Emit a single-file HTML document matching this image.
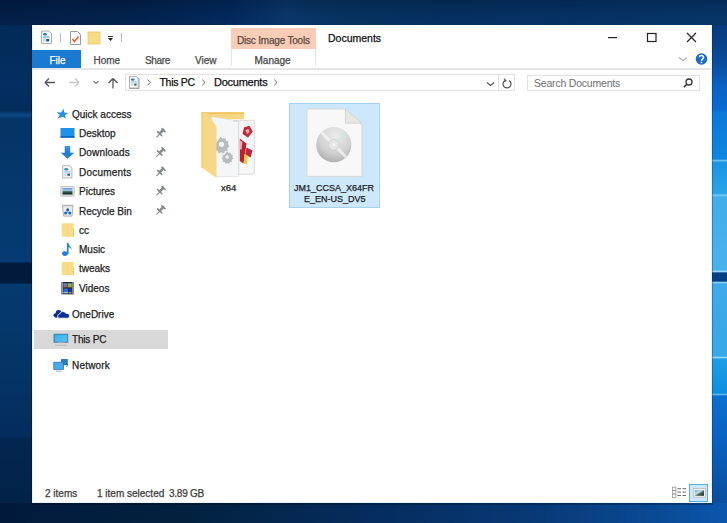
<!DOCTYPE html>
<html><head><meta charset="utf-8">
<style>
*{margin:0;padding:0;box-sizing:border-box}
html,body{width:727px;height:523px;overflow:hidden}
body{position:relative;font-family:"Liberation Sans",sans-serif;background:#03264f}
.a{position:absolute}
.t{position:absolute;white-space:nowrap;line-height:1;color:#222;-webkit-text-stroke:0.25px currentColor}
#bgtop{left:0;top:0;width:727px;height:25px;background:linear-gradient(180deg,rgba(0,0,20,0.18),rgba(0,0,0,0) 60%,rgba(20,60,120,0.08)),linear-gradient(90deg,#021e46 0px,#02214b 130px,#03285a 230px,#093666 285px,#06325f 340px,#052f5e 450px,#053262 600px,#063567 727px)}
#bgleft{left:0;top:25px;width:32px;height:478px;background:linear-gradient(180deg,#022a57 0px,#042f60 60px,#032c5a 86px,#0a4a88 90px,#053466 94px,#053a70 200px,#053a72 237px,#021a3c 238px,#021a3c 258px,#053a70 259px,#043464 350px,#042c5c 410px,#032650 415px,#022248 478px)}
#bgbot{left:0;top:503px;width:727px;height:20px;background:linear-gradient(90deg,#011a3c 0%,#02213f 25%,#052c5c 50%,#083a78 75%,#0a4c98 92%,#0b56ac 100%)}
#bgright{left:712px;top:25px;width:15px;height:478px;background:linear-gradient(180deg,#07387a 0px,#0a4a98 35px,#0a62c4 62px,#0a6ad0 84px,#0c78d8 88px,#0e86e0 134px,#6cc0f0 135.5px,#1b94e2 137.5px,#2aa4e8 169px,#80d0f5 170px,#40aeea 172px,#48b2ec 245px,#9ad8f8 246.5px,#053f85 248px,#053f85 256px,#8ad0f5 257.5px,#3eaaea 259px,#38a8e6 331px,#90d8f8 332.5px,#1e9ee6 334px,#0f8ee0 368px,#60b8f0 369.5px,#0a70d0 371px,#0a60c0 415px,#0a4e9c 478px)}
#win{left:32px;top:25px;width:680px;height:478px;background:#fff;border-left:1px solid #e2f6ff;border-right:1px solid #e2f6ff;border-bottom:1px solid #e6f6ff}
#edgeR{left:712px;top:25px;width:1px;height:478px;background:rgba(0,30,70,0.3)}
#edgeB{left:31px;top:503px;width:682px;height:2px;background:rgba(0,5,25,0.3)}
#edgeL{left:31px;top:25px;width:1px;height:478px;background:rgba(0,10,40,0.4)}
</style></head><body>
<div class="a" id="bgtop"></div>
<div class="a" id="bgleft"></div>
<div class="a" id="bgbot"></div>
<div class="a" id="bgright"></div>
<div class="a" id="win"></div>
<div class="a" id="edgeR"></div>
<div class="a" id="edgeL"></div>
<div class="a" id="edgeB"></div>

<!-- title bar QAT -->
<svg class="a" style="left:40px;top:30px" width="86" height="16" viewBox="0 0 86 16">
  <!-- properties doc -->
  <path d="M1.5 1h7.5l2.5 2.5v10h-10z" fill="#f4f6f8" stroke="#a8a8a8" stroke-width="0.9"/>
  <ellipse cx="5" cy="4.3" rx="2" ry="1.3" fill="#2a78c8"/>
  <rect x="3" y="6.2" width="6.5" height="1.8" fill="#8cc4ec"/>
  <rect x="6.2" y="9" width="3" height="2.4" fill="#1f4f8a"/>
  <rect x="3" y="8.6" width="2.4" height="2.6" fill="#bcd8f0"/>
  <rect x="20" y="3" width="1" height="9" fill="#b8b8b8"/>
  <!-- check doc -->
  <path d="M30.5 1.5h7l3 3v10h-10z" fill="#fafafa" stroke="#9a9a9a"/>
  <path d="M32.5 9l2 2.5 4-5" stroke="#e0602a" stroke-width="1.5" fill="none"/>
  <!-- folder -->
  <rect x="48" y="2" width="12" height="12" fill="#f7dc86"/>
  <rect x="48" y="2" width="12" height="12" fill="none" stroke="#e8c860" stroke-width="0.8"/>
  <!-- dropdown -->
  <rect x="68" y="6" width="5" height="1" fill="#333"/>
  <path d="M68 8h5l-2.5 3z" fill="#222"/>
  <rect x="81" y="3" width="1" height="9" fill="#b8b8b8"/>
</svg>

<!-- contextual tab -->
<div class="a" style="left:231px;top:28px;width:85px;height:21px;background:#fbcdb6"></div>
<div class="a" style="left:231px;top:49px;width:85px;height:17px;border-left:1px solid #e6e6e6;border-right:1px solid #e6e6e6"></div>
<div class="t" style="left:237px;top:36px;font-size:10px;letter-spacing:-0.2px;color:#5a4a42">Disc Image Tools</div>
<div class="t" style="left:254.5px;top:56px;font-size:10px;color:#444">Manage</div>
<div class="t" style="left:328px;top:33px;font-size:10.5px;color:#111">Documents</div>

<!-- window controls -->
<svg class="a" style="left:600px;top:28px" width="106" height="20">
  <rect x="8" y="9" width="9" height="1.2" fill="#222"/>
  <rect x="47.5" y="5.5" width="8.5" height="8" fill="none" stroke="#222" stroke-width="1.2"/>
  <path d="M87 5l9 9M96 5l-9 9" stroke="#222" stroke-width="1.2"/>
</svg>

<!-- ribbon tabs -->
<div class="a" style="left:32px;top:50px;width:49px;height:18px;background:#1a79d0"></div>
<div class="t" style="left:49.5px;top:56px;font-size:10px;color:#fff">File</div>
<div class="t" style="left:93.5px;top:55.6px;font-size:10px;color:#4a4a4a">Home</div>
<div class="t" style="left:145px;top:55.6px;font-size:10px;letter-spacing:-0.35px;color:#4a4a4a">Share</div>
<div class="t" style="left:195px;top:55.6px;font-size:10px;color:#4a4a4a">View</div>
<div class="a" style="left:32px;top:68px;width:679px;height:2px;background:#e6e6e6"></div>
<!-- collapse chevron & help -->
<svg class="a" style="left:676px;top:52px" width="36" height="14">
  <path d="M3 5.5l4 3 4-3" stroke="#b0b0b0" stroke-width="1.1" fill="none"/>
  <circle cx="25.5" cy="7" r="5.8" fill="#1a6cc8"/>
  <path d="M23.4 5.3a2.1 2 0 1 1 3 1.9c-0.7 0.4-0.9 0.8-0.9 1.6" stroke="#fff" stroke-width="1.5" fill="none"/>
  <rect x="24.7" y="9.6" width="1.6" height="1.6" fill="#fff"/>
</svg>

<!-- nav buttons -->
<svg class="a" style="left:40px;top:74px" width="84" height="18">
  <path d="M5 8.5h10M5 8.5l4-4M5 8.5l4 4" stroke="#555" stroke-width="1.3" fill="none"/>
  <path d="M29 8.5h10M39 8.5l-4-4M39 8.5l-4 4" stroke="#c8c8c8" stroke-width="1.3" fill="none"/>
  <path d="M53.5 7l2.5 2.5 2.5-2.5" stroke="#777" stroke-width="1.1" fill="none"/>
  <path d="M73 4.5v10M73 4.5l-4.5 4.5M73 4.5l4.5 4.5" stroke="#555" stroke-width="1.3" fill="none"/>
</svg>

<!-- address bar -->
<div class="a" style="left:125px;top:74px;width:390px;height:17px;border:1px solid #e2e2e2"></div>
<div class="a" style="left:498px;top:75px;width:1px;height:15px;background:#e0e0e0"></div>
<svg class="a" style="left:126px;top:75px" width="160" height="15">
  <path d="M3.5 1.5h7l2.5 2.5v9.5h-9.5z" fill="#f6f6f6" stroke="#9a9a9a"/>
  <path d="M5.5 5h4M5.5 8h5M5.5 11h4" stroke="#4a90d0" stroke-width="1.2"/>
</svg>
<div class="t" style="left:159.5px;top:77px;font-size:10.5px;letter-spacing:-0.3px;color:#111">This PC</div>
<div class="t" style="left:214px;top:77px;font-size:11px;letter-spacing:-0.25px;color:#111">Documents</div>
<svg class="a" style="left:140px;top:74px" width="145" height="18">
  <path d="M7.6 5.6l2.8 2.8-2.8 2.8" stroke="#6a6a6a" stroke-width="1" fill="none"/>
  <path d="M62.2 5.6l2.8 2.8-2.8 2.8" stroke="#6a6a6a" stroke-width="1" fill="none"/>
  <path d="M134.2 5.6l2.8 2.8-2.8 2.8" stroke="#6a6a6a" stroke-width="1" fill="none"/>
</svg>
<svg class="a" style="left:484px;top:76px" width="32" height="14">
  <path d="M3 6.5l3.5 3 3.5-3" stroke="#555" stroke-width="1.2" fill="none"/>
  <path d="M25 4.5a4 4 0 1 1-3.6-0.2" stroke="#555" stroke-width="1.2" fill="none"/>
  <path d="M20 2.5l2 2.3-2.5 1" stroke="#555" stroke-width="1.1" fill="none"/>
</svg>

<!-- search -->
<div class="a" style="left:527px;top:75px;width:173px;height:16px;border:1px solid #e2e2e2"></div>
<div class="t" style="left:534px;top:78px;font-size:10.5px;letter-spacing:-0.2px;color:#707070;-webkit-text-stroke:0">Search Documents</div>
<svg class="a" style="left:681px;top:76px" width="14" height="14">
  <circle cx="8" cy="6" r="3" stroke="#333" stroke-width="1.3" fill="none"/>
  <path d="M5.8 8.2l-3 3" stroke="#333" stroke-width="1.5"/>
</svg>

<!-- nav pane -->
<div class="a" style="left:34px;top:330px;width:134px;height:19px;background:#d9d9d9"></div>
<div class="t" style="left:72px;top:110px;font-size:10px;color:#1e1e1e">Quick access</div>
<div class="t" style="left:79px;top:129px;font-size:10px;color:#1e1e1e">Desktop</div>
<div class="t" style="left:79px;top:148px;font-size:10px;letter-spacing:0.15px;color:#1e1e1e">Downloads</div>
<div class="t" style="left:79px;top:168px;font-size:10px;letter-spacing:0.2px;color:#1e1e1e">Documents</div>
<div class="t" style="left:79px;top:187px;font-size:10px;color:#1e1e1e">Pictures</div>
<div class="t" style="left:79px;top:207px;font-size:10px;color:#1e1e1e">Recycle Bin</div>
<div class="t" style="left:79px;top:226px;font-size:10px;color:#1e1e1e">cc</div>
<div class="t" style="left:79px;top:245px;font-size:10px;color:#1e1e1e">Music</div>
<div class="t" style="left:79px;top:264px;font-size:10px;color:#1e1e1e">tweaks</div>
<div class="t" style="left:79px;top:283.5px;font-size:10px;color:#1e1e1e">Videos</div>
<div class="t" style="left:72px;top:309.5px;font-size:10px;color:#1e1e1e">OneDrive</div>
<div class="t" style="left:72px;top:334.5px;font-size:10px;letter-spacing:-0.2px;color:#1e1e1e">This PC</div>
<div class="t" style="left:72px;top:360.5px;font-size:10px;letter-spacing:0.2px;color:#1e1e1e">Network</div>

<!-- content -->
<div class="t" style="left:221px;top:183px;font-size:9.5px;color:#222">x64</div>
<div class="a" style="left:289px;top:103px;width:91px;height:105px;background:#cde7fb;border:1px solid #a6d2f2"></div>
<div class="t" style="left:294px;top:183.5px;font-size:9px;color:#222">JM1_CCSA_X64FR</div>
<div class="t" style="left:304px;top:195px;font-size:9px;color:#222">E_EN-US_DV5</div>

<!-- status bar -->
<div class="t" style="left:45px;top:489px;font-size:10px;color:#3c3c3c">2 items</div>
<div class="t" style="left:97px;top:489px;font-size:10px;color:#3c3c3c">1 item selected</div>
<div class="t" style="left:169px;top:489px;font-size:10px;letter-spacing:-0.25px;color:#3c3c3c">3.89 GB</div>
<div class="a" style="left:689px;top:484px;width:19px;height:18px;background:#cce8ff;border:1px solid #58aee2"></div>


<svg class="a" style="left:0;top:0" width="727" height="523" viewBox="0 0 727 523">
 <defs>
  <linearGradient id="gArrow" x1="0" y1="0" x2="0" y2="1"><stop offset="0" stop-color="#3d9ae6"/><stop offset="1" stop-color="#1f78d0"/></linearGradient>
  <linearGradient id="gPic" x1="0" y1="0" x2="0" y2="1"><stop offset="0" stop-color="#4a8ed8"/><stop offset="0.35" stop-color="#a8c8e8"/><stop offset="0.55" stop-color="#3a6a5a"/><stop offset="1" stop-color="#0a1a14"/></linearGradient>
  <linearGradient id="gScr" x1="0" y1="0" x2="1" y2="1"><stop offset="0" stop-color="#3aaee8"/><stop offset="1" stop-color="#5cc4f4"/></linearGradient>
  <radialGradient id="gCD" cx="0.55" cy="0.25" r="0.85"><stop offset="0" stop-color="#ececec"/><stop offset="0.55" stop-color="#d2d2d2"/><stop offset="1" stop-color="#a6a6a6"/></radialGradient>
  <linearGradient id="gFold" x1="0" y1="0" x2="1" y2="0"><stop offset="0" stop-color="#f3d376"/><stop offset="1" stop-color="#f8de8e"/></linearGradient>
  <linearGradient id="gPic2" x1="0" y1="0" x2="1" y2="1"><stop offset="0" stop-color="#6aa8e0"/><stop offset="0.4" stop-color="#c8dcec"/><stop offset="0.6" stop-color="#4a6a60"/><stop offset="1" stop-color="#1a2a24"/></linearGradient>
 </defs>
 <!-- address bar doc icon -->
 <path d="M129.5 76.3h6.5l2.3 2.3v9.4h-8.8z" fill="#f4f6f8" stroke="#b0aca8" stroke-width="0.9"/>
 <ellipse cx="132.8" cy="79.6" rx="1.9" ry="1.2" fill="#2a78c8"/>
 <rect x="131" y="81.2" width="6" height="1.6" fill="#a8d4f0"/>
 <rect x="134.2" y="83.6" width="2.4" height="2" fill="#2f6a5a"/>
 <rect x="131" y="83.2" width="2.2" height="2.4" fill="#c8dcf0"/>

 <!-- star -->
 <polygon points="63.5,108.8 64.3,112.6 68,113.2 65,115.3 65.8,118.8 62.8,116.7 57.6,118.6 59.9,115 56.5,112.3 61.2,112.4" fill="#2a8fe2"/>
 <!-- desktop -->
 <rect x="60.5" y="128" width="14" height="9.7" fill="#1d92ea"/>
 <rect x="60.5" y="136.2" width="14" height="1.5" fill="#0e62b8"/>
 <!-- downloads -->
 <rect x="64.7" y="146" width="5.5" height="7.2" fill="url(#gArrow)"/>
 <polygon points="60.7,152.8 74.2,152.8 67.45,158.8" fill="#2080d4"/>
 <!-- documents -->
 <path d="M62.7 165.6h6.6l2.6 2.6v9.7h-9.2z" fill="#f4f6f8" stroke="#b0b0b0" stroke-width="0.9"/>
 <ellipse cx="66.2" cy="169.3" rx="2" ry="1.3" fill="#3a88d0"/>
 <rect x="64.2" y="171.2" width="6.2" height="1.6" fill="#a0d0f0"/>
 <rect x="67.4" y="173.6" width="2.6" height="2.2" fill="#2a5a8a"/>
 <rect x="64.2" y="173.4" width="2.2" height="2.4" fill="#c0daf0"/>
 <!-- pictures -->
 <rect x="60.8" y="186.4" width="13.5" height="9.8" rx="1.5" fill="#e8e8e8" stroke="#b4b4b4" stroke-width="0.8"/>
 <rect x="62.5" y="188.2" width="10" height="6.3" fill="url(#gPic)"/>
 <!-- recycle -->
 <path d="M62.5 205.5h10.5l-1 10.6h-8.5z" fill="#ececec" stroke="#a8a8a8" stroke-width="0.9"/>
 <rect x="62.2" y="204.7" width="11" height="1.6" fill="#b8b8b8"/>
 <circle cx="67.7" cy="209.8" r="1.5" fill="#1566b5"/><circle cx="65.6" cy="213.1" r="1.5" fill="#1566b5"/><circle cx="69.8" cy="213.1" r="1.5" fill="#1566b5"/><circle cx="67.7" cy="212" r="1" fill="#5aa8e8"/>
 <!-- cc folder -->
 <rect x="61.8" y="223.3" width="12" height="13.4" fill="#f8dc88"/>
 <rect x="67" y="224" width="0.8" height="12" fill="#f2d070" opacity="0.6"/>
 <rect x="73" y="229" width="0.8" height="7.7" fill="#e8c868"/>
 <!-- music -->
 <ellipse cx="65" cy="253.6" rx="2.9" ry="2.3" fill="#1c82da"/>
 <rect x="67" y="242.8" width="1.6" height="11" fill="#1c82da"/>
 <path d="M68 243c0.5 2.5 3.8 3.5 3.6 7.3-0.3-2.3-2-3.2-3.6-3.4z" fill="#1c82da"/>
 <!-- tweaks folder -->
 <rect x="61.8" y="262" width="12" height="13.1" fill="#f8dc88"/>
 <rect x="67" y="263" width="0.8" height="11.5" fill="#f2d070" opacity="0.6"/>
 <rect x="73" y="268" width="0.8" height="7" fill="#e8c868"/>
 <!-- videos -->
 <rect x="61.4" y="282" width="12.4" height="12.3" fill="#1c2230"/>
 <rect x="61.4" y="282" width="1.6" height="12.3" fill="#9a9aa0"/>
 <rect x="72.2" y="282" width="1.6" height="12.3" fill="#9a9aa0"/>
 <rect x="63.4" y="283.2" width="4" height="2.6" fill="#5a8ad0"/>
 <rect x="63.4" y="285.8" width="4" height="1.6" fill="#c06060"/>
 <rect x="67.8" y="283.2" width="4" height="4.2" fill="#8cb040"/>
 <rect x="63.4" y="288.5" width="4.5" height="4.8" fill="#2a6ee0"/>
 <rect x="63.4" y="292" width="4.5" height="1.2" fill="#a0c0f0"/>
 <rect x="68.2" y="288.5" width="3.6" height="4.8" fill="#1a3a8a"/>
 <rect x="68.5" y="292" width="3" height="1.3" fill="#b0a030"/>
 <!-- onedrive -->
 <g fill="#0c2f96">
  <circle cx="58.6" cy="312.9" r="2.9"/>
  <circle cx="55.6" cy="315.3" r="2.1"/>
  <rect x="55.6" y="313.5" width="5" height="4" />
 </g>
 <g fill="#0c2f96" stroke="#fff" stroke-width="0.8">
  <path d="M58.8 318.2a2.2 2.2 0 0 1 0.8-4.1a3.4 3.4 0 0 1 6.4-0.6a2.3 2.3 0 0 1 1.9 4.7z"/>
 </g>
 <!-- this pc -->
 <rect x="54" y="334.2" width="13.8" height="8" fill="url(#gScr)" stroke="#2c6f98" stroke-width="0.8"/>
 <rect x="55" y="344.6" width="11.5" height="1.2" fill="#b8b8b8"/>
 <rect x="58" y="342.6" width="5.5" height="2" fill="#d4d4d4"/>
 <!-- network -->
 <rect x="61" y="359" width="6.8" height="6" fill="#2a7cc4"/>
 <rect x="53.8" y="362.2" width="9.8" height="7.2" fill="#48aae8" stroke="#2a6aa0" stroke-width="0.7"/>
 <rect x="56" y="370.6" width="5.5" height="1.4" fill="#a8c8e0"/>
 <path d="M63.6 364.5h4l-1 2.5" stroke="#2a6aa0" stroke-width="0.9" fill="none"/>
 <!-- pins -->
 <g stroke="#858a8c" fill="none" stroke-linecap="round">
  <g transform="translate(0,0.0)"><path d="M156.8 137l2.6-2.6" stroke-width="1.1"/><path d="M157.6 131.6l4.2 4.2" stroke-width="1.5"/><path d="M159.8 133.4l3.4-3.4" stroke-width="2.6"/><path d="M162 128.6l3 3" stroke-width="1.6"/></g>
  <g transform="translate(0,19.3)"><path d="M156.8 137l2.6-2.6" stroke-width="1.1"/><path d="M157.6 131.6l4.2 4.2" stroke-width="1.5"/><path d="M159.8 133.4l3.4-3.4" stroke-width="2.6"/><path d="M162 128.6l3 3" stroke-width="1.6"/></g>
  <g transform="translate(0,38.6)"><path d="M156.8 137l2.6-2.6" stroke-width="1.1"/><path d="M157.6 131.6l4.2 4.2" stroke-width="1.5"/><path d="M159.8 133.4l3.4-3.4" stroke-width="2.6"/><path d="M162 128.6l3 3" stroke-width="1.6"/></g>
  <g transform="translate(0,57.9)"><path d="M156.8 137l2.6-2.6" stroke-width="1.1"/><path d="M157.6 131.6l4.2 4.2" stroke-width="1.5"/><path d="M159.8 133.4l3.4-3.4" stroke-width="2.6"/><path d="M162 128.6l3 3" stroke-width="1.6"/></g>
  <g transform="translate(0,77.2)"><path d="M156.8 137l2.6-2.6" stroke-width="1.1"/><path d="M157.6 131.6l4.2 4.2" stroke-width="1.5"/><path d="M159.8 133.4l3.4-3.4" stroke-width="2.6"/><path d="M162 128.6l3 3" stroke-width="1.6"/></g>
 </g>

 <!-- x64 folder -->
 <rect x="201.5" y="112.3" width="42.6" height="7" fill="#f6d680"/>
 <rect x="201.5" y="112.3" width="42.6" height="1.6" fill="#eec462"/>
 <polygon points="211.5,116.8 238.7,121 238.7,176.5 216,176.5" fill="#f5f6f8" stroke="#dedede" stroke-width="0.7"/>
 <polygon points="233,121 254.3,120.2 254.3,173.8 238.7,174.5 238.7,121" fill="#f7f7f7" stroke="#d4d4d4" stroke-width="0.8"/>
 <g fill="#b8bcc0">
  <g transform="translate(221.5,144.3) scale(1.3) translate(-221.5,-144.3)"><path d="M221 138.5l1.4 1.6 2-0.6 0.6 2 2 0.8-0.6 2 1.4 1.6-1.8 1.2 0.2 2.1-2.1 0.2-1 1.9-1.9-0.9-1.8 1-0.9-1.9-2.1-0.3 0.3-2.1-1.6-1.3z"/></g>
  <g transform="translate(227.2,157) scale(1.2) translate(-227.2,-157)"><path d="M227.2 152.3l1.1 1.3 1.6-0.4 0.4 1.6 1.6 0.7-0.5 1.6 1.1 1.2-1.4 1 0.1 1.7-1.7 0.2-0.8 1.5-1.5-0.7-1.4 0.8-0.7-1.5-1.7-0.3 0.3-1.7-1.3-1.1 1.2-1.1-0.3-1.7 1.7-0.2z"/></g>
 </g>
 <circle cx="221.5" cy="144.3" r="2.6" fill="#f2f3f5"/>
 <circle cx="227.2" cy="157" r="1.8" fill="#f2f3f5"/>
 <polygon points="244,127.5 249.5,125.8 252.8,131.8 248,137.5 242.5,134" fill="#c42a3c"/>
 <polygon points="245.5,130 248.5,129 249.5,132 247,134" fill="#f0b0b8"/>
 <polygon points="239.8,138.5 246.5,143.5 243.5,163.5 239.8,161" fill="#b8202e"/>
 <polygon points="239.8,140 242.5,142 241.5,150 239.8,149" fill="#f0a8b0"/>
 <polygon points="246.5,147.5 252.5,150.5 250.5,157.5 245.2,154.5" fill="#c02436"/>
 <polygon points="244.2,154 247.8,155.5 247,164.5 243.8,163.5" fill="#f2c846"/>
 <polygon points="201.5,113 207,113 216.4,126.4 216.4,178 201.5,167.5" fill="#f7d886"/>
 <polygon points="201.5,113 203,113 203,167.9 201.5,167.5" fill="#f2cc70"/>
<!-- ISO file -->
 <path d="M307 109h38.4l16.6 16.3v51.1h-55z" fill="#f8f8f8" stroke="#d6d6d6" stroke-width="0.9"/>
 <path d="M345.4 109v14.2h16.6z" fill="#e6e6e2" stroke="#d0d0d0" stroke-width="0.8"/>
 <circle cx="333.8" cy="144.7" r="17.6" fill="url(#gCD)"/>
 <path d="M321.5 132.4l24.6 24.6" stroke="#f4f6f6" stroke-width="3" opacity="0.75"/>
 <path d="M346 132.5l-8 8" stroke="#c8eee0" stroke-width="2.2" opacity="0.8"/>
 <circle cx="333.8" cy="144.7" r="5.3" fill="#e6e6e6" stroke="#d0d0d0" stroke-width="0.9"/>
 <circle cx="333.8" cy="144.7" r="1.8" fill="#f4f4f4"/>
 <!-- status bar view icons -->
 <g fill="none" stroke="#9a9a9a" stroke-width="0.8">
  <rect x="672.5" y="487.2" width="3.4" height="3.4"/>
  <rect x="672.5" y="490.6" width="3.4" height="3.4"/>
  <rect x="672.5" y="494" width="3.4" height="3.4"/>
 </g>
 <g fill="#6a6a6a">
  <rect x="677.5" y="488.2" width="3.5" height="1"/><rect x="682.5" y="488.2" width="3.5" height="1"/>
  <rect x="677.5" y="491.6" width="3.5" height="1"/><rect x="682.5" y="491.6" width="3.5" height="1"/>
  <rect x="677.5" y="495" width="3.5" height="1"/><rect x="682.5" y="495" width="3.5" height="1"/>
 </g>
 <rect x="693.3" y="488.4" width="12.2" height="8.8" fill="#f4f4f4" stroke="#b8b8b8" stroke-width="0.8"/>
 <rect x="694.8" y="490" width="9.2" height="5.8" fill="url(#gPic2)"/>
</svg>
</body></html>
